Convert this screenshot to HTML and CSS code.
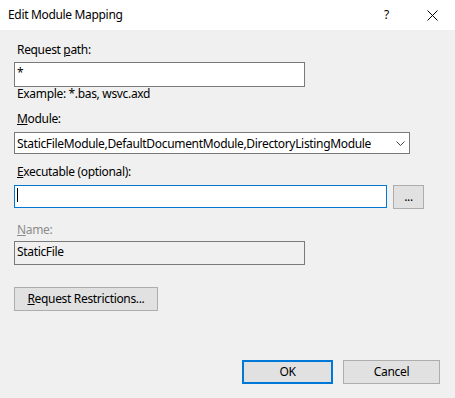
FILE: index.html
```html
<!DOCTYPE html>
<html lang="en">
<head>
    <meta charset="UTF-8">
    <meta name="viewport" content="width=device-width, initial-scale=1.0">
    <title>Edit Module Mapping</title>
    <link rel="stylesheet" href="styles.css">
</head>
<body>
    <div class="dialog">
        <div class="titlebar">
            <span class="title">Edit Module Mapping</span>
            <span class="help">?</span>
            <svg class="close" width="11" height="11" viewBox="0 0 11 11">
                <path d="M0.5 0.5 L10.5 10.5 M10.5 0.5 L0.5 10.5" stroke="#000" stroke-width="1" fill="none"/>
            </svg>
        </div>

        <div class="content">
            <label class="label label-path" for="requestPath">Request <u>p</u>ath:</label>
            <input type="text" id="requestPath" class="textbox path" value="*">
            <div class="hint">Example: *.bas, wsvc.axd</div>

            <label class="label label-module" for="module"><u>M</u>odule:</label>
            <div class="select-wrap">
                <select id="module" class="select">
                    <option>StaticFileModule,DefaultDocumentModule,DirectoryListingModule</option>
                </select>
                <svg class="chevron" width="9" height="5" viewBox="0 0 9 5">
                    <path d="M0.5 0.5 L4.5 4.5 L8.5 0.5" stroke="#404040" stroke-width="1" fill="none"/>
                </svg>
            </div>

            <label class="label label-exec" for="executable"><u>E</u>xecutable (optional):</label>
            <div class="exec-row">
                <div class="exec-wrap">
                    <input type="text" id="executable" class="textbox exec" value="">
                    <span class="caret"></span>
                </div>
                <button class="btn browse">...</button>
            </div>

            <label class="label label-name" for="name"><u>N</u>ame:</label>
            <input type="text" id="name" class="textbox name" value="StaticFile" readonly>

            <button class="btn restrictions"><u>R</u>equest Restrictions...</button>
        </div>

        <div class="actions">
            <button class="btn ok">OK</button>
            <button class="btn cancel">Cancel</button>
        </div>
    </div>
</body>
</html>
```

FILE: styles.css
```css
body {
    margin: 0;
    padding: 0;
    background-color: #f0f0f0;
    color: #000;
    font-family: "Noto Sans", "DejaVu Sans", sans-serif;
    font-size: 12px;
    letter-spacing: -0.33px;
}

.dialog {
    height: 398px;
    display: flex;
    flex-direction: column;
}

.titlebar {
    height: 30px;
    background-color: #fff;
    display: flex;
    align-items: center;
    line-height: 16px;
}

.title {
    margin-left: 8px;
}

.help {
    margin-left: auto;
    margin-right: 38px;
}

.close {
    margin-right: 17px;
}

.content {
    display: flex;
    flex-direction: column;
    align-items: flex-start;
    padding: 12px 0 0 14px;
}

.label {
    display: block;
    line-height: 16px;
    margin-left: 3px;
}

.label u,
.btn u {
    text-decoration-thickness: 1px;
}

.label-path {
    margin-bottom: 4px;
}

.label-module {
    margin-top: 9px;
    margin-bottom: 5px;
}

.label-exec {
    margin-top: 10px;
    margin-bottom: 5px;
}

.label-name {
    margin-top: 13px;
    margin-bottom: 3px;
    color: #8c8c8c;
}

.hint {
    line-height: 16px;
    margin: -1px 0 0 3px;
}

.textbox {
    box-sizing: border-box;
    border: 1px solid #7a7a7a;
    background-color: #fff;
    font: inherit;
    letter-spacing: inherit;
    color: #000;
    padding: 0 2px 4px;
    margin: 0;
    outline: none;
}

.path {
    width: 291px;
    height: 25px;
}

.name {
    width: 291px;
    height: 24px;
    background-color: #f0f0f0;
}

.select-wrap {
    position: relative;
}

.select {
    box-sizing: border-box;
    width: 396px;
    height: 22px;
    border: 1px solid #7a7a7a;
    border-radius: 0;
    background-color: #fff;
    font: inherit;
    letter-spacing: inherit;
    color: #000;
    padding: 0 0 0 2px;
    margin: 0;
    appearance: none;
    -webkit-appearance: none;
    outline: none;
}

.chevron {
    position: absolute;
    left: 382px;
    top: 9px;
}

.exec-row {
    display: flex;
    align-items: flex-start;
    gap: 6px;
}

.exec-wrap {
    position: relative;
}

.exec {
    width: 373px;
    height: 23px;
    border-color: #0078d7;
}

.caret {
    position: absolute;
    left: 3px;
    top: 3px;
    width: 1px;
    height: 14px;
    background-color: #000;
}

.btn {
    box-sizing: border-box;
    height: 24px;
    background-color: #e1e1e1;
    border: 1px solid #adadad;
    border-radius: 0;
    font: inherit;
    letter-spacing: inherit;
    color: #000;
    padding: 0;
    margin: 0;
    line-height: 16px;
}

.browse {
    width: 31px;
}

.restrictions {
    width: 144px;
    margin-top: 22px;
}

.actions {
    margin-top: auto;
    display: flex;
    justify-content: flex-end;
    gap: 10px;
    padding: 0 15px 14px 0;
}

.ok {
    width: 91px;
    border: 2px solid #0078d7;
}

.cancel {
    width: 97px;
}
```
